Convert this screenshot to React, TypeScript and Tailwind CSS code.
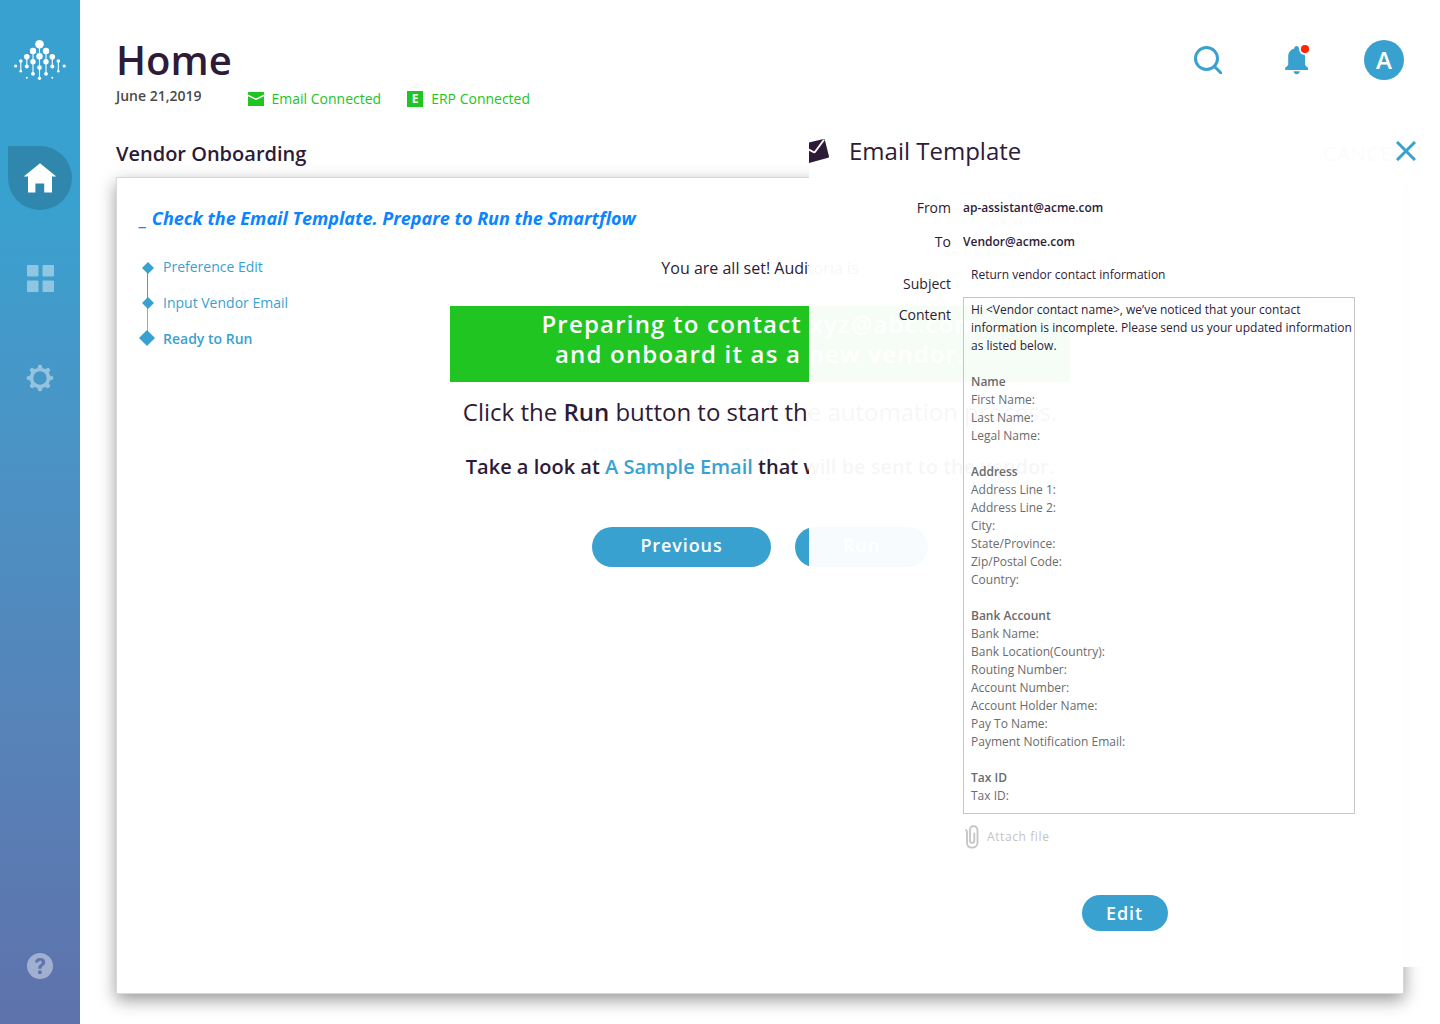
import type { ReactNode } from "react";

const steps = [
  { label: "Preference Edit", current: false },
  { label: "Input Vendor Email", current: false },
  { label: "Ready to Run", current: true },
];

const sections = [
  { title: "Name", fields: ["First Name:", "Last Name:", "Legal Name:"] },
  {
    title: "Address",
    fields: [
      "Address Line 1:",
      "Address Line 2:",
      "City:",
      "State/Province:",
      "Zip/Postal Code:",
      "Country:",
    ],
  },
  {
    title: "Bank Account",
    fields: [
      "Bank Name:",
      "Bank Location(Country):",
      "Routing Number:",
      "Account Number:",
      "Account Holder Name:",
      "Pay To Name:",
      "Payment Notification Email:",
    ],
  },
  { title: "Tax ID", fields: ["Tax ID:"] },
];

// x, y, radius
const logoDots = [
  [25.5, 4.3, 4.3],
  [19, 11, 3.2],
  [32, 11, 3.2],
  [25.5, 16.3, 3.2],
  [12.8, 16.8, 2.8],
  [38.3, 16.8, 2.8],
  [19, 21.8, 2.7],
  [32, 21.8, 2.7],
  [6.8, 21, 1.8],
  [44.3, 21, 1.8],
  [1.6, 26, 1.6],
  [50.2, 26, 1.6],
  [12.8, 26.6, 2],
  [38.3, 26.6, 2],
  [25.5, 27.6, 2.3],
  [6.8, 31.3, 1.3],
  [44.3, 31.3, 1.3],
  [19, 33.8, 1.9],
  [32, 33.8, 1.9],
  [12.8, 37.8, 1],
  [38.3, 37.8, 1],
  [25.5, 38.2, 1.7],
];

function Logo() {
  return (
    <svg viewBox="0 0 52 40" className="h-10 w-[52px]" fill="white" aria-label="Auditoria">
      <path
        d="M25.5 4V38M19 11V34M32 11V34M12.8 17V27M38.3 17V27M6.8 21V31M44.3 21V31"
        stroke="white"
        strokeWidth="1.1"
      />
      {logoDots.map(([x, y, r]) => (
        <circle key={`${x}-${y}`} cx={x} cy={y} r={r} />
      ))}
    </svg>
  );
}

function HomeIcon() {
  return (
    <svg viewBox="0 0 32 30" className="h-[30px] w-8" fill="white">
      <path d="M16 0.3 32.4 13.6H28V29.6H20.2V20.4H11.4V29.6H4V13.6H-0.4Z" />
    </svg>
  );
}

function GridIcon() {
  return (
    <svg viewBox="0 0 27 27" className="h-[27px] w-[27px]" fill="white" fillOpacity="0.42">
      <rect width="11.5" height="11.5" rx="1" />
      <rect x="15.5" width="11.5" height="11.5" rx="1" />
      <rect y="15.5" width="11.5" height="11.5" rx="1" />
      <rect x="15.5" y="15.5" width="11.5" height="11.5" rx="1" />
    </svg>
  );
}

function GearIcon() {
  return (
    <svg viewBox="-14 -14 28 28" className="h-7 w-7 opacity-[0.42]" fill="white">
      <circle r="8.5" fill="none" stroke="white" strokeWidth="3.6" />
      {[0, 45, 90, 135, 180, 225, 270, 315].map((angle) => (
        <path
          key={angle}
          transform={`rotate(${angle})`}
          d="M-3.3 -9.4C-2.3 -10 -2.1 -10.8 -2 -12C-1.8 -13.7 1.8 -13.7 2 -12C2.1 -10.8 2.3 -10 3.3 -9.4Z"
        />
      ))}
    </svg>
  );
}

function HelpIcon() {
  return (
    <svg viewBox="0 0 26 26" className="h-[26px] w-[26px]">
      <path
        fill="white"
        fillOpacity="0.42"
        fillRule="evenodd"
        d="M13 0a13 13 0 1 0 0 26a13 13 0 1 0 0-26ZM8 9.6C8.2 6.6 10.2 5 13.1 5C16.2 5 18.2 6.6 18.2 9.2C18.2 11 17.3 12.1 16 13.1C14.9 13.9 14.5 14.4 14.5 15.7H11.3C11.2 13.6 11.9 12.6 13.2 11.6C14.3 10.8 14.8 10.3 14.8 9.3C14.8 8.3 14.1 7.7 13.1 7.7C12 7.7 11.4 8.4 11.2 9.6ZM12.9 17.2a2 2 0 1 0 0 4a2 2 0 1 0 0-4Z"
      />
    </svg>
  );
}

function SearchIcon() {
  return (
    <svg viewBox="0 0 28 28" className="h-7 w-7" fill="none" stroke="#39a1cf" strokeWidth="3">
      <circle cx="12.5" cy="12.5" r="11" />
      <path d="M20.5 20.5 27 27" strokeLinecap="round" />
    </svg>
  );
}

function BellIcon() {
  return (
    <svg viewBox="-1 0 28 32" className="h-8 w-7">
      <path
        fill="#39a1cf"
        d="M13.6 2C15 2 15.9 3 15.9 4.6C19.6 5.6 22 8.6 22 12.6V20.6C22.6 22.4 24 22.8 25 23.7V25.9H2.2V23.7C3.2 22.8 4.6 22.4 5.2 20.6V12.6C5.2 8.6 7.6 5.6 11.3 4.6C11.3 3 12.2 2 13.6 2Z"
      />
      <path fill="#39a1cf" d="M10.6 27.2H16.8C16.6 29 15.4 30.2 13.7 30.2S10.8 29 10.6 27.2Z" />
      <circle cx="22" cy="5" r="6" fill="white" />
      <circle cx="22" cy="5" r="4.1" fill="#ff2600" />
    </svg>
  );
}

function MailIcon() {
  return (
    <svg viewBox="0 0 16 14" className="h-[14px] w-4" fill="#21c521">
      <path d="M0 0H16V2.6L8 6.4L0 2.6Z" />
      <path d="M0 4.3 8 8.1 16 4.3V14H0Z" />
    </svg>
  );
}

function TemplateIcon() {
  return (
    <svg viewBox="0 0 20 24" className="h-6 w-5">
      <path fill="#2d1b37" d="M0 3.4 14.6 0C15.2 0 15.6 0.2 15.8 0.8L20 17.4C20.1 18 19.8 18.5 19.2 18.7L0 24Z" />
      <path d="M0 10.6 4.3 13C5 13.4 5.8 13.2 6.3 12.5L15 0.8" fill="none" stroke="white" strokeWidth="1.9" />
    </svg>
  );
}

function PaperclipIcon() {
  return (
    <svg
      viewBox="0 0 14 24"
      className="h-6 w-[14px]"
      fill="none"
      stroke="#c4c4c4"
      strokeWidth="1.8"
      strokeLinecap="round"
    >
      <path d="M1 5C1.8 5.4 2 6 2 7V17.5C2 20.6 4 22.7 7 22.7S12.5 20.6 12.5 17.5V5.5C12.5 2.8 11 1.2 8.7 1.2S5 2.8 5 5.5V15.5C5 17 5.8 17.9 7.2 17.9S9.3 17 9.3 15.5V8.5" />
    </svg>
  );
}

function NavItem({ label, active, children }: { label: string; active?: boolean; children: ReactNode }) {
  return (
    <a
      href="#"
      aria-label={label}
      className={
        active
          ? "flex size-16 items-center justify-center rounded-full rounded-tl-none bg-[#2f87ae]"
          : "flex size-16 items-center justify-center"
      }
    >
      {children}
    </a>
  );
}

function Sidebar() {
  return (
    <aside className="flex w-20 shrink-0 flex-col items-center bg-linear-to-b from-[#39a1cf] from-20% to-[#5e72ac] pt-10 pb-[26px]">
      <Logo />
      <nav className="mt-[66px] flex flex-1 flex-col items-center gap-9">
        <NavItem label="Home" active>
          <HomeIcon />
        </NavItem>
        <NavItem label="Apps">
          <GridIcon />
        </NavItem>
        <NavItem label="Settings">
          <GearIcon />
        </NavItem>
        <div className="mt-auto">
          <NavItem label="Help">
            <HelpIcon />
          </NavItem>
        </div>
      </nav>
    </aside>
  );
}

function Header() {
  return (
    <header className="flex items-start justify-between">
      <div>
        <h1 className="text-[40px] leading-[48px] font-semibold">Home</h1>
        <div className="flex items-start text-sm">
          <p className="leading-6 font-semibold text-[#4a4a4a]">June 21,2019</p>
          <ul className="ml-[46px] flex gap-[26px] text-[#21c521]">
            <li className="flex h-[30px] items-center gap-2">
              <MailIcon />
              Email Connected
            </li>
            <li className="flex h-[30px] items-center gap-2">
              <span className="flex size-4 items-center justify-center bg-[#21c521] text-xs font-bold text-white">
                E
              </span>
              ERP Connected
            </li>
          </ul>
        </div>
      </div>
      <div className="flex gap-12 pt-1">
        <button type="button" aria-label="Search" className="flex size-10 items-center justify-center">
          <SearchIcon />
        </button>
        <button type="button" aria-label="Notifications" className="flex size-10 items-center justify-center">
          <BellIcon />
        </button>
        <button
          type="button"
          aria-label="Account"
          className="flex size-10 items-center justify-center rounded-full bg-[#39a1cf] text-2xl font-semibold text-white"
        >
          A
        </button>
      </div>
    </header>
  );
}

function Steps() {
  return (
    <div className="col-start-1 row-start-1 flex gap-2 justify-self-start">
      <svg viewBox="0 0 15 108" className="h-[108px] w-[15px] overflow-visible" fill="#39a1cf">
        <path d="M7.5 18V54" stroke="#39a1cf" />
        <path d="M7.5 54V90" stroke="#a5a5a5" />
        <path d="M8 13 14 19 8 25 2 19Z" />
        <path d="M8 48 14 54 8 60 2 54Z" />
        <path d="M7 81 15 89 7 97 -1 89Z" />
      </svg>
      <ol className="text-sm text-[#39a1cf]">
        {steps.map(({ label, current }) => (
          <li key={label} className={current ? "leading-9 font-semibold" : "leading-9"}>
            {label}
          </li>
        ))}
      </ol>
    </div>
  );
}

function Onboarding() {
  return (
    <section className="mt-[7px] flex-1 border border-[#d8d8d8] bg-white px-[23px] pt-[26px] shadow-[0_6px_16px_rgba(0,0,0,0.4)]">
      <h3 className="text-lg leading-7 font-bold text-[#0a84ff] italic">
        _ Check the Email Template. Prepare to Run the Smartflow
      </h3>
      <div className="mt-[17px] grid grid-cols-1">
        <Steps />
        <div className="col-start-1 row-start-1 flex flex-col items-center justify-self-center text-center">
          <p className="leading-[38px]">You are all set! Auditoria is</p>
          <p className="mt-[19px] w-[620px] bg-[#21c521] pt-[3px] pb-[13px] text-2xl leading-[30px] font-semibold tracking-wider text-white">
            Preparing to contact xyz@abc.com
            <br />
            and onboard it as a new vendor.
          </p>
          <p className="mt-3 text-2xl leading-9">
            Click the <b className="font-semibold">Run</b> button to start the automation process.
          </p>
          <p className="mt-[23px] text-xl leading-7 font-semibold">
            Take a look at{" "}
            <a href="#" className="text-[#39a1cf]">
              A Sample Email
            </a>{" "}
            that will be sent to the vendor.
          </p>
          <div className="mt-[46px] flex gap-6 text-lg font-semibold text-white">
            <button type="button" className="h-10 w-[179px] rounded-full bg-[#39a1cf] pb-1 tracking-wider">
              Previous
            </button>
            <button type="button" className="h-10 w-[133px] rounded-full bg-[#39a1cf] pb-1 tracking-wider">
              Run
            </button>
          </div>
        </div>
      </div>
    </section>
  );
}

function EmailTemplate() {
  return (
    <div
      role="dialog"
      aria-labelledby="template-title"
      className="absolute top-[120px] right-0 h-[847px] w-[631px] bg-white/96"
    >
      <div className="flex h-[71px] items-start pt-[15px] pr-6">
        <span className="flex h-8 w-10 items-center">
          <TemplateIcon />
        </span>
        <h2 id="template-title" className="text-2xl leading-8">
          Email Template
        </h2>
        <button type="button" aria-label="Close" className="ml-auto flex h-8 items-center">
          <svg viewBox="0 0 20 20" className="size-5" stroke="#39a1cf" strokeWidth="3">
            <path d="M1 1 19 19M19 1 1 19" />
          </svg>
        </button>
      </div>

      <form className="grid grid-cols-[142px_1fr] gap-x-3 pr-[85px]">
        <label htmlFor="from" className="text-right text-sm leading-[34px]">
          From
        </label>
        <input id="from" readOnly defaultValue="ap-assistant@acme.com" className="text-xs leading-[34px] font-semibold" />
        <label htmlFor="to" className="text-right text-sm leading-[34px]">
          To
        </label>
        <input id="to" readOnly defaultValue="Vendor@acme.com" className="text-xs leading-[34px] font-semibold" />
        <label htmlFor="subject" className="self-end text-right text-sm leading-[26px]">
          Subject
        </label>
        <input
          id="subject"
          defaultValue="Return vendor contact information"
          className="mb-2 h-[30px] px-2 text-xs"
        />
        <span id="content-label" className="text-right text-sm leading-9">
          Content
        </span>
        <div
          role="textbox"
          aria-multiline="true"
          aria-labelledby="content-label"
          className="min-w-0 border border-[#c6c6c6] pt-[3px] pb-2 pl-[7px] text-xs leading-[18px] text-[#6b6b6b]"
        >
          <p className="whitespace-nowrap text-[#2d1b37]">
            Hi &lt;Vendor contact name&gt;, we’ve noticed that your contact
            <br />
            information is incomplete. Please send us your updated information
            <br />
            as listed below.
          </p>
          {sections.map(({ title, fields }) => (
            <div key={title} className="mt-[18px]">
              <h4 className="font-semibold">{title}</h4>
              {fields.map((field) => (
                <p key={field}>{field}</p>
              ))}
            </div>
          ))}
        </div>
        <button
          type="button"
          className="col-start-2 mt-[11px] flex h-6 items-center gap-2 justify-self-start pl-[2px] text-xs tracking-wider text-[#c4c4c4]"
        >
          <PaperclipIcon />
          Attach file
        </button>
      </form>

      <div className="mt-[46px] flex justify-center">
        <button
          type="button"
          className="h-9 w-[86px] rounded-full bg-[#39a1cf] text-lg font-semibold tracking-wider text-white"
        >
          Edit
        </button>
      </div>
    </div>
  );
}

export default function App() {
  return (
    <div className="flex min-h-screen bg-white font-['Open_Sans',sans-serif] text-[#2d1b37]">
      <Sidebar />
      <main className="relative flex flex-1 flex-col px-9 pt-9 pb-[30px]">
        <Header />
        <div className="mt-6 flex items-center justify-between">
          <h2 className="text-xl leading-8 font-semibold">Vendor Onboarding</h2>
          <button type="button" className="text-xl tracking-wider text-[#9b9b9b]">
            CANCEL
          </button>
        </div>
        <Onboarding />
        <EmailTemplate />
      </main>
    </div>
  );
}
